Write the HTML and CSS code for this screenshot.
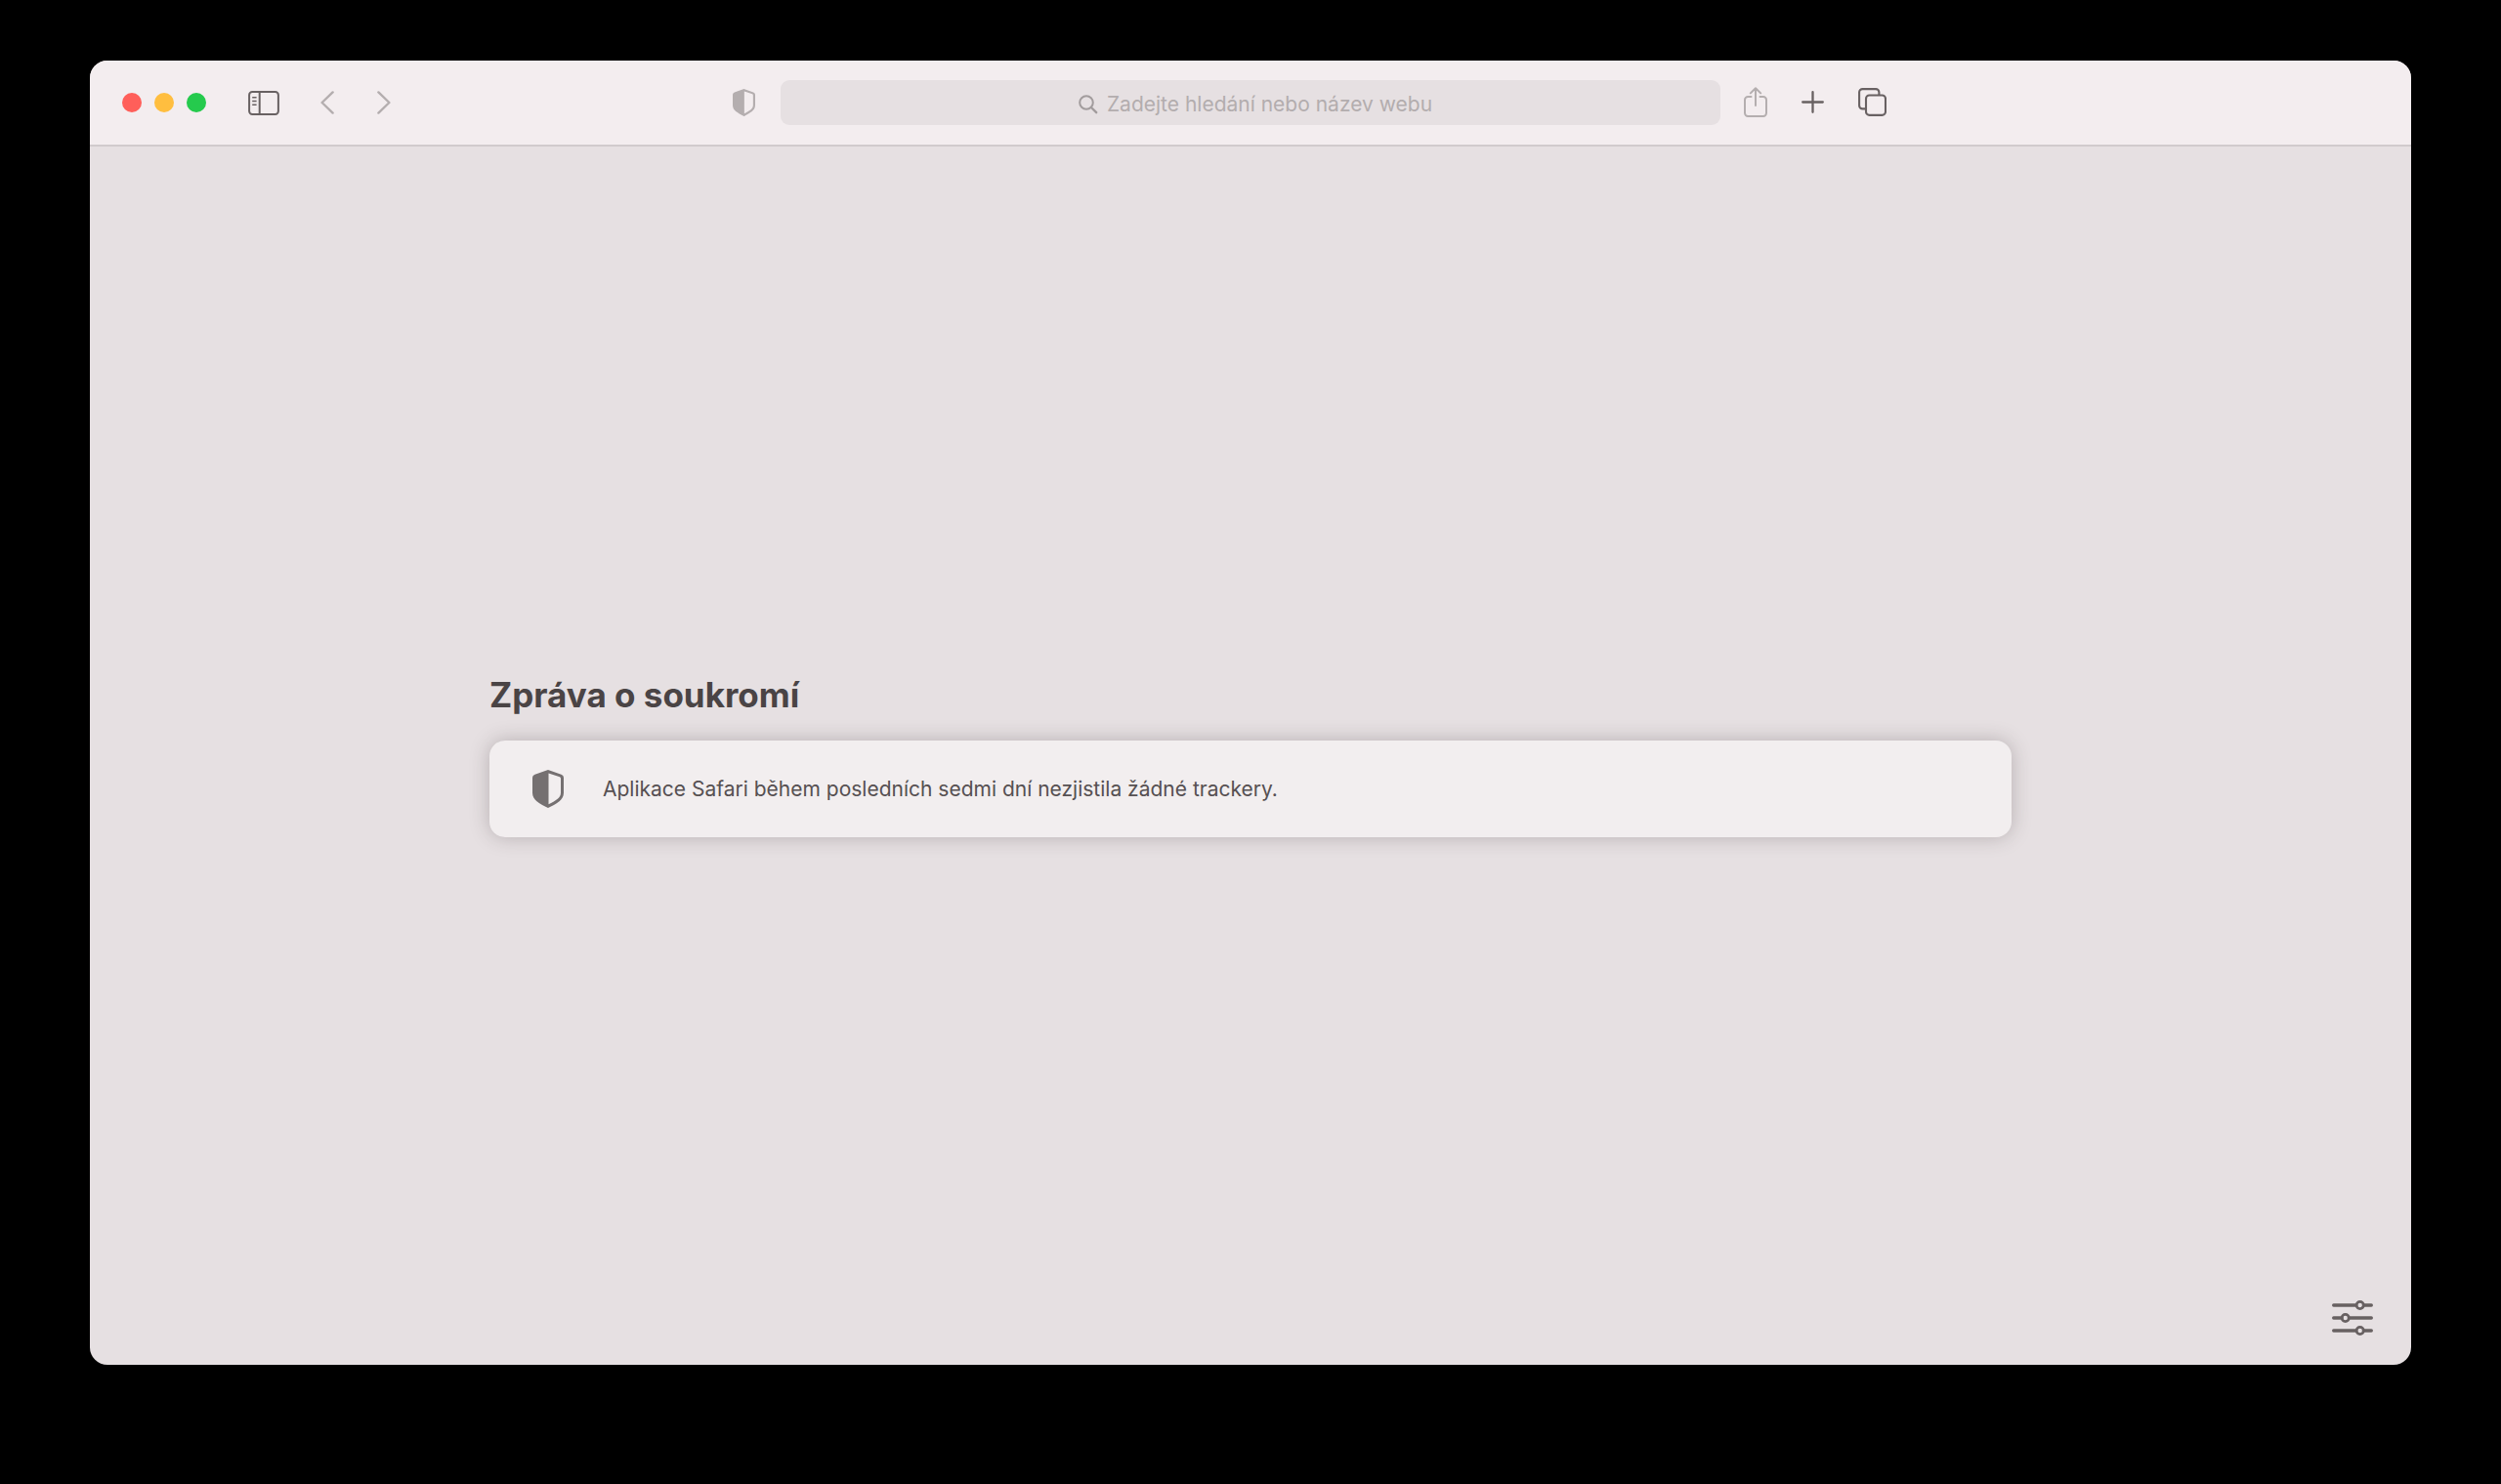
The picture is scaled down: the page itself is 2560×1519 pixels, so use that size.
FILE: index.html
```html
<!DOCTYPE html>
<html lang="cs">
<head>
<meta charset="utf-8">
<meta name="viewport" content="width=device-width, initial-scale=1">
<title>Zpráva o soukromí</title>
<link rel="stylesheet" href="styles.css">
</head>
<body>
<div class="window">
  <header class="toolbar">
    <div class="toolbar-start">
      <div class="lights">
        <button class="light light-close" aria-label="Zavřít"></button>
        <button class="light light-minimize" aria-label="Minimalizovat"></button>
        <button class="light light-zoom" aria-label="Zvětšit"></button>
      </div>
      <button class="icon-button sidebar-button" aria-label="Boční panel">
        <svg width="32" height="25" viewBox="0 0 32 25" fill="none" stroke="currentColor" stroke-width="2">
          <rect x="1.1" y="1.1" width="29.8" height="22.8" rx="3.2"/>
          <path d="M11.7 1v23"/>
          <path d="M4.2 6.7h4.4M4.2 10.5h4.4M4.2 14.2h4.4" stroke-width="1.4"/>
        </svg>
      </button>
      <nav class="history">
        <button class="icon-button faded" aria-label="Zpět">
          <svg width="14" height="24" viewBox="0 0 14 24" fill="none" stroke="currentColor" stroke-width="2.4" stroke-linecap="round" stroke-linejoin="round"><path d="M12.6 1.4 1.6 12l11 10.600"/></svg>
        </button>
        <button class="icon-button faded" aria-label="Vpřed">
          <svg width="14" height="24" viewBox="0 0 14 24" fill="none" stroke="currentColor" stroke-width="2.4" stroke-linecap="round" stroke-linejoin="round"><path d="M1.4 1.4 12.400 12l-11 10.600"/></svg>
        </button>
      </nav>
      <button class="icon-button faded report-button" aria-label="Zpráva o soukromí">
        <svg width="23" height="28" viewBox="0 0 32 39" fill="currentColor" fill-rule="evenodd"><path d="M16 0 29.500 4.800Q32 5.700 32 8v15.500c0 4-2 6.700-4.500 8.700-3.500 2.700-7.500 5-11.500 6.800-4-1.800-8-4.100-11.500-6.800C2 30.200 0 27.500 0 23.500V8q0-2.300 2.500-3.200zM16.500 3.400v31.800c3.500-1.700 6.500-3.300 9.200-5.500 2-1.600 3.300-3.500 3.300-6.200V9q0-1.300-1-1.700z"/></svg>
      </button>
    </div>
    <label class="address">
      <svg width="20" height="20" viewBox="0 0 20 20" fill="none" stroke="currentColor" stroke-width="2" stroke-linecap="round"><circle cx="8" cy="8" r="6.800"/><path d="m13 13 5.200 5.200" stroke-width="2.400"/></svg>
      <input class="address-input" type="text" placeholder="Zadejte hledání nebo název webu" aria-label="Adresa">
    </label>
    <div class="toolbar-end">
      <button class="icon-button faded" aria-label="Sdílet">
        <svg width="24" height="31" viewBox="0 0 24 31" fill="none" stroke="currentColor" stroke-width="2" stroke-linecap="round" stroke-linejoin="round"><path d="M7.500 10H4.200A3.200 3.200 0 0 0 1 13.200v13.600A3.200 3.200 0 0 0 4.200 30h15.600a3.200 3.200 0 0 0 3.200-3.200V13.200a3.200 3.200 0 0 0-3.200-3.200h-3.300M12 19V1.300M6.800 6.400 12 1.200l5.200 5.200"/></svg>
      </button>
      <button class="icon-button" aria-label="Nový panel">
        <svg width="23" height="23" viewBox="0 0 23 23" fill="none" stroke="currentColor" stroke-width="2.300" stroke-linecap="round"><path d="M11.500 1.200v20.600M1.200 11.500h20.600"/></svg>
      </button>
      <button class="icon-button" aria-label="Přehled panelů">
        <svg width="29" height="29" viewBox="0 0 29 29" fill="none" stroke="currentColor" stroke-width="2.100"><rect x="8" y="7.500" width="20" height="20.400" rx="3.500"/><path d="M8 21.400H4.500A3.400 3.400 0 0 1 1.100 18V4.500a3.400 3.400 0 0 1 3.400-3.400H18a3.400 3.400 0 0 1 3.400 3.400v3"/></svg>
      </button>
    </div>
  </header>
  <main class="start-page">
    <section class="privacy">
      <h1 class="privacy-title">Zpráva o soukromí</h1>
      <div class="privacy-card">
        <svg width="32" height="39" viewBox="0 0 32 39" fill="currentColor" fill-rule="evenodd"><path d="M16 0 29.500 4.800Q32 5.700 32 8v15.500c0 4-2 6.700-4.500 8.700-3.500 2.700-7.500 5-11.500 6.800-4-1.800-8-4.100-11.500-6.800C2 30.200 0 27.500 0 23.500V8q0-2.300 2.500-3.200zM16.500 3.400v31.800c3.500-1.700 6.500-3.300 9.200-5.500 2-1.600 3.300-3.500 3.300-6.200V9q0-1.300-1-1.700z"/></svg>
        <p class="privacy-text">Aplikace Safari během posledních sedmi dní nezjistila žádné trackery.</p>
      </div>
    </section>
    <button class="icon-button settings-button" aria-label="Přizpůsobit úvodní stránku">
      <svg width="42" height="36" viewBox="0 0 42 36" fill="none" stroke="currentColor" stroke-width="3.400" stroke-linecap="round"><path d="M1.700 5h22.800M33 5h7.300M1.700 18H10M18.500 18h21.800M1.700 31h22.800M33 31h7.300"/><g stroke-width="2.800"><circle cx="28.700" cy="5" r="3.600"/><circle cx="13.700" cy="18" r="3.600"/><circle cx="28.700" cy="31" r="3.600"/></g></svg>
    </button>
  </main>
</div>
</body>
</html>
```
FILE: styles.css
```css
* {
  box-sizing: border-box;
}

body {
  display: flex;
  min-height: 100vh;
  margin: 0;
  padding: 62px 92px 122px;
  background: #000;
  color: #4a4445;
  font-family: Inter, "Liberation Sans", sans-serif;
}

svg {
  display: block;
  flex: none;
}

.window {
  display: flex;
  flex: 1;
  flex-direction: column;
  overflow: hidden;
  border-radius: 18px;
  background: #e6e0e2;
}

.toolbar {
  display: grid;
  grid-template-columns: 1fr minmax(auto, 962px) 1fr;
  align-items: center;
  height: 88px;
  border-bottom: 2px solid #d1cbcd;
  background: #f3edef;
}

.toolbar-start,
.toolbar-end,
.lights,
.history {
  display: flex;
  align-items: center;
}

.toolbar-start {
  padding: 0 26px 0 33px;
}

.toolbar-end {
  gap: 35px;
  padding: 0 24px 2px;
}

.lights {
  gap: 13px;
}

.light {
  width: 20px;
  height: 20px;
  padding: 0;
  border: 0;
  border-radius: 50%;
}

.light-close {
  background: #ff5f5a;
}

.light-minimize {
  background: #ffbe3f;
}

.light-zoom {
  background: #25ca4d;
}

.icon-button {
  padding: 0;
  border: 0;
  background: none;
  color: #686162;
}

.faded {
  color: #b4aeaf;
}

.sidebar-button {
  margin: 0 42px 0 43px;
}

.history {
  gap: 44px;
}

.report-button {
  margin-left: auto;
}

.address {
  display: flex;
  align-items: center;
  justify-content: center;
  gap: 9px;
  height: 46px;
  padding: 3px 0 0 10px;
  border-radius: 9px;
  background: #e6e0e2;
  color: #a29c9d;
}

.address-input {
  field-sizing: content;
  padding: 0;
  border: 0;
  outline: 0;
  background: none;
  color: #4a4445;
  font: 400 21px/28px Inter, "Liberation Sans", sans-serif;
}

.address-input::placeholder {
  color: #b3adae;
}

.start-page {
  display: grid;
  flex: 1;
  grid-template-columns: minmax(0, 1558px);
  align-content: center;
  justify-content: center;
  position: relative;
}

.privacy-title {
  margin: 0 0 26px;
  font-size: 35px;
  font-weight: 700;
  line-height: 42px;
}

.privacy-card {
  display: flex;
  align-items: center;
  gap: 40px;
  padding: 30px 44px;
  border-radius: 16px;
  background: #f2eeef;
  box-shadow: 0 0 20px rgb(60 50 53 / 28%);
  color: #757071;
}

.privacy-text {
  margin: 0;
  color: #565052;
  font-size: 21px;
  line-height: 28px;
}

.settings-button {
  position: absolute;
  right: 39px;
  bottom: 30px;
}
```
